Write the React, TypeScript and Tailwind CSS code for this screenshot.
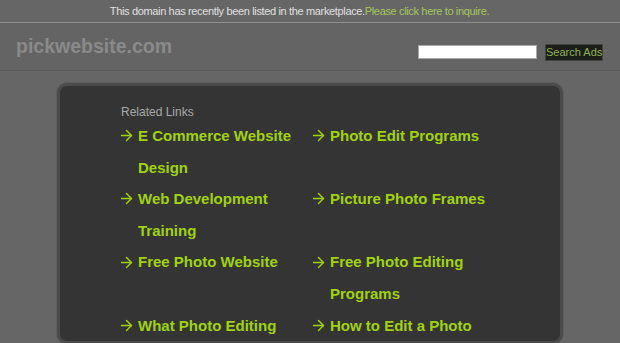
import { ArrowRight } from "lucide-react";

const links: string[] = [
  "E Commerce Website Design",
  "Photo Edit Programs",
  "Web Development Training",
  "Picture Photo Frames",
  "Free Photo Website",
  "Free Photo Editing Programs",
  "What Photo Editing",
  "How to Edit a Photo",
];

const App = () => {
  return (
    <div className="min-h-screen bg-[#666666] font-['Liberation_Sans',Arial,sans-serif]">
      {/* Top notice */}
      <div className="h-[23px] border-b border-[#8f8f8f] pr-[21px] text-center text-[11px] leading-[22px] text-[#e0e0e0] tracking-[-0.35px]">
        This domain has recently been listed in the marketplace.
        <a href="#" className="text-[#a3c95a]">
          Please click here to inquire.
        </a>
      </div>

      {/* Header */}
      <div className="flex h-[48px] items-center justify-between border-b border-[#5c5c5c] bg-[#646464] pl-4 pr-[17px]">
        <div className="mt-[1px] text-[19.5px] font-bold text-[#8a8a8a]">
          pickwebsite.com
        </div>
        <div className="mt-[11px] flex items-center gap-2">
          <input
            type="text"
            className="h-[14px] w-[119px] border border-[#aaaaaa] bg-white"
          />
          <button className="h-[17px] w-[58px] whitespace-nowrap border border-[#444] bg-[#1c1e1a] text-[11px] leading-[15px] text-[#8cb34a]">
            Search Ads
          </button>
        </div>
      </div>

      {/* Content panel */}
      <div className="ml-[57px] mt-[12px] w-[506px] rounded-[10px] border-[3px] border-[#4b4b4b] bg-[#343434] shadow-[0_0_0_1px_#5d5d5d]">
        <div className="pl-[61px] pt-[19px]">
          <div className="text-[12px] leading-[14px] text-[#a8a8a8]">
            Related Links
          </div>
          <div className="mt-[1px] grid grid-cols-[192px_192px]">
            {links.map((l) => (
              <a
                key={l}
                href="#"
                className="flex text-[15px] font-bold leading-[31.6px] text-[#a0d40a]"
              >
                <span className="flex h-[31.6px] w-[17px] shrink-0 items-center">
                  <ArrowRight size={17} strokeWidth={2.1} className="-ml-[3px]" />
                </span>
                <span>{l}</span>
              </a>
            ))}
          </div>
        </div>
      </div>
    </div>
  );
};

export default App;
